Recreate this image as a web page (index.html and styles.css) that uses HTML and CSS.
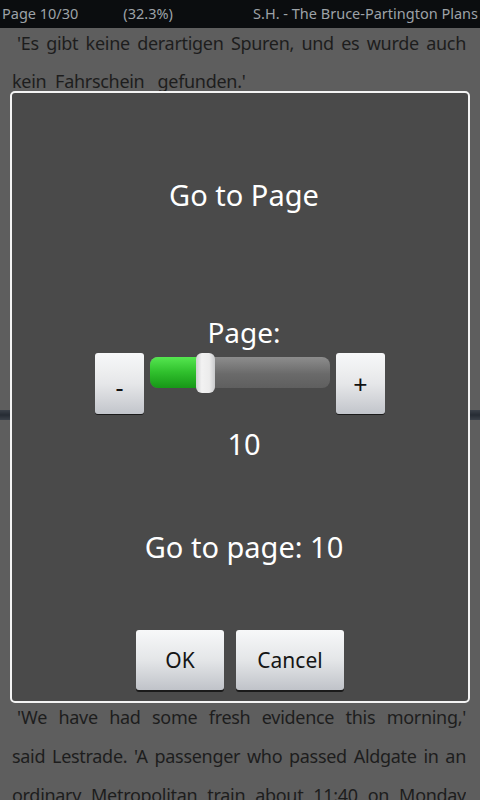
FILE: index.html
```html
<!DOCTYPE html>
<html lang="en">
<head>
<meta charset="UTF-8" />
<meta name="viewport" content="width=device-width, initial-scale=1" />
<title>Go to Page</title>
<link rel="stylesheet" href="styles.css">
</head>
<body>
<div class="statusbar">
  <span class="page-count">Page 10/30</span>
  <span class="percent">(32.3%)</span>
  <span class="book-title">S.H. - The Bruce-Partington Plans</span>
</div>

<div class="reader">
  <div class="para para-top">
    <div class="line first">'Es gibt keine derartigen Spuren, und es wurde auch</div>
    <div class="line last">kein&nbsp; Fahrschein&nbsp;&nbsp; gefunden.'</div>
  </div>
  <div class="band"></div>
  <div class="para para-bottom">
    <div class="line first">'We have had some fresh evidence this morning,'</div>
    <div class="line">said Lestrade. 'A passenger who passed Aldgate in an</div>
    <div class="line">ordinary Metropolitan train about 11:40 on Monday</div>
  </div>
</div>

<div class="dialog">
  <div class="dialog-title">Go to Page</div>
  <div class="label">Page:</div>
  <div class="slider-row">
    <button class="step">-</button>
    <div class="track">
      <div class="fill"></div>
      <div class="thumb"></div>
    </div>
    <button class="step plus">+</button>
  </div>
  <div class="value">10</div>
  <div class="goto">Go to page: 10</div>
  <div class="actions">
    <button class="btn ok">OK</button>
    <button class="btn cancel">Cancel</button>
  </div>
</div>
</body>
</html>
```

FILE: styles.css
```css
* {
  box-sizing: border-box;
}
body {
  margin: 0;
  width: 480px;
  height: 800px;
  overflow: hidden;
  background: #5e5e5e;
  font-family: 'Noto Sans', 'Open Sans', 'DejaVu Sans', sans-serif;
  position: relative;
}
.statusbar {
  height: 28px;
  background: #0b0d0f;
  color: #9da2a7;
  font-size: 14.5px;
  display: flex;
  align-items: center;
  padding: 0 2px 2px 2px;
  white-space: nowrap;
}
.percent {
  margin-left: 45px;
}
.book-title {
  margin-left: auto;
}

.reader {
  color: #1d1d1d;
  font-size: 18px;
  letter-spacing: -0.3px;
}
.para {
  padding: 0 14px 0 12px;
}
.para-top {
  line-height: 38px;
  margin-top: -4px;
}
.para-bottom {
  line-height: 39px;
  margin-top: 278px;
}
.line {
  text-align: justify;
  text-align-last: justify;
  white-space: nowrap;
  overflow: hidden;
}
.line.first {
  padding-left: 5px;
}
.line.last {
  text-align: left;
  text-align-last: left;
}
.band {
  height: 10px;
  margin-top: 310px;
  background: linear-gradient(#3a4048, #262c34 50%, #3a4048);
}

.dialog {
  position: absolute;
  left: 10px;
  top: 91px;
  width: 460px;
  height: 612px;
  border: 2px solid #f4f4f4;
  border-radius: 5px;
  background: #4a4a4a;
  color: #fff;
  display: flex;
  flex-direction: column;
  align-items: center;
  padding-bottom: 11px;
}
.dialog-title,
.label,
.value,
.goto {
  padding-left: 8px;
}
.dialog-title {
  font-size: 29px;
  line-height: 40px;
  margin-top: 82px;
}
.label {
  font-size: 28px;
  line-height: 36px;
  margin-top: 99px;
}
.slider-row {
  display: flex;
  gap: 6px;
  margin-top: 3px;
  height: 61px;
}
.step {
  width: 49px;
  height: 61px;
  border: none;
  border-radius: 3px;
  background: linear-gradient(#f7f8f9, #e6e7e9 50%, #c2c5cb);
  box-shadow: 0 1px 0 #1a1a1a;
  color: #111;
  font-family: inherit;
  font-size: 25px;
  padding: 6px 0 0 0;
}
.step.plus {
  padding-top: 0;
}
.track {
  position: relative;
  width: 180px;
  height: 31px;
  margin-top: 4px;
  border-radius: 8px;
  background: linear-gradient(#8d8d8d, #6a6a6a 55%, #5f5f5f);
}
.fill {
  width: 50px;
  height: 31px;
  border-radius: 8px 0 0 8px;
  background: linear-gradient(#55e650, #2fbf2c 50%, #179717);
}
.thumb {
  position: absolute;
  left: 46px;
  top: -4px;
  width: 19px;
  height: 40px;
  border-radius: 6px;
  background: linear-gradient(90deg, #cfd0d2, #f2f2f2 30%, #ececec 70%, #c9cacc);
}
.value {
  font-size: 29px;
  line-height: 40px;
  margin-top: 10px;
}
.goto {
  font-size: 29px;
  line-height: 40px;
  margin-top: 63px;
}
.actions {
  display: flex;
  gap: 12px;
  margin-top: 63px;
}
.btn {
  height: 60px;
  border: none;
  border-radius: 3px;
  background: linear-gradient(#f7f8f9, #e4e6e8 50%, #c0c3c9);
  box-shadow: 0 2px 0 #1a1a1a;
  color: #151515;
  font-family: inherit;
  font-size: 21px;
  padding: 0;
}
.btn.ok {
  width: 88px;
}
.btn.cancel {
  width: 108px;
}
```
